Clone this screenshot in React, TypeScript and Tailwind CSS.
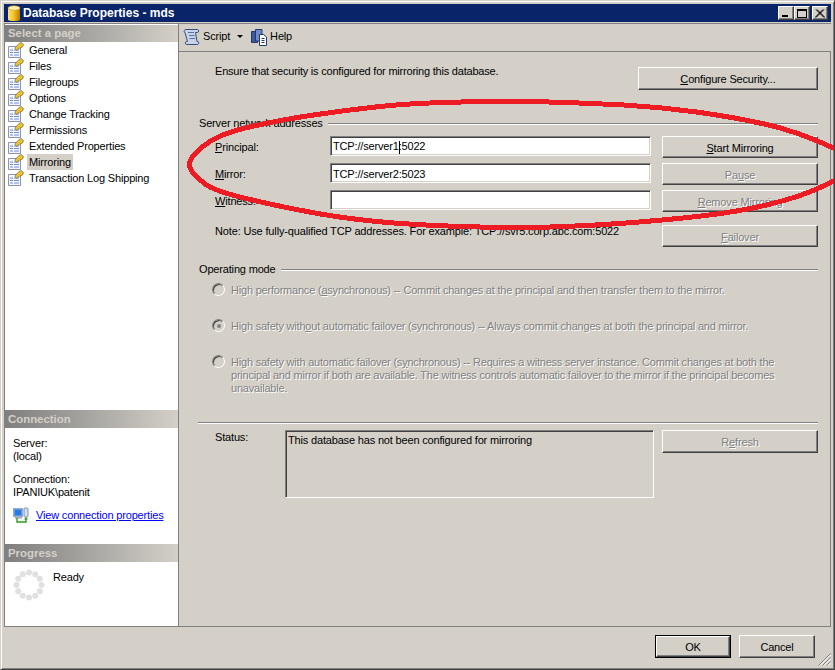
import type { ReactNode } from "react";

const FONT = "font-['Liberation_Sans',Arial,sans-serif]";

// hand-drawn red ring that lies over the form, points read off the screenshot
const RING: [number, number][] = [
  [840, 151], [800, 132], [733, 117], [660, 107], [587, 103], [510, 101], [413, 103], [347, 110],
  [280, 120], [223, 133], [197, 150], [187, 165], [197, 178], [213, 190], [263, 203], [340, 218],
  [413, 225], [510, 228], [557, 227], [633, 223], [733, 213], [800, 197], [840, 178],
];

function ringPath() {
  let d = `M${RING[0][0]} ${RING[0][1]}`;
  for (let i = 1; i < RING.length - 1; i++) {
    const mx = (RING[i][0] + RING[i + 1][0]) / 2;
    const my = (RING[i][1] + RING[i + 1][1]) / 2;
    d += ` Q${RING[i][0]} ${RING[i][1]} ${mx} ${my}`;
  }
  const last = RING[RING.length - 1];
  return d + ` L${last[0]} ${last[1]}`;
}

function PageIcon() {
  return (
    <svg width="16" height="16" viewBox="0 0 16 16" className="shrink-0">
      <path d="M0.5 4.5H12.5V15.5H0.5Z" fill="#f4f6fc" stroke="#8a94b0" />
      <path d="M2 8H5M6 8H11M2 10.5H5M6 10.5H11M2 13H5M6 13H11" stroke="#6f8ad8" />
      <path d="M7 6L11 1.5L13 0.5L15.5 2.5L14.5 5L11 6.5L8.5 8.5Z" fill="#f0c232" stroke="#6e6a3a" strokeWidth="0.7" />
    </svg>
  );
}

function DbIcon() {
  return (
    <svg width="14" height="17" viewBox="0 0 14 17" className="shrink-0">
      <defs>
        <linearGradient id="db" x1="0" x2="1" y1="0" y2="0">
          <stop offset="0" stopColor="#ffe27a" />
          <stop offset="0.45" stopColor="#f8c42a" />
          <stop offset="1" stopColor="#b87a08" />
        </linearGradient>
      </defs>
      <path d="M1 3V14.5C1 16.5 13 16.5 13 14.5V3Z" fill="url(#db)" />
      <ellipse cx="7" cy="3" rx="6" ry="2.2" fill="#fff2b0" stroke="#d09a18" strokeWidth="0.6" />
    </svg>
  );
}

function ScriptIcon() {
  return (
    <svg width="18" height="18" viewBox="0 0 18 18" className="shrink-0">
      <path d="M4 1.5H15.5C17 1.5 17 4.5 15.5 4.5H13.5L15 13.5H16C17 13.5 17 16.5 15.5 16.5H4.5C3 16.5 3 13.5 4.5 13.5H5.5L3 4.5C1.5 4.5 2 1.5 4 1.5Z" fill="#c8d2e8" stroke="#33507f" />
      <path d="M6 4.5H12M7 7.5H12.5M7.5 10.5H13" stroke="#5a72a0" />
    </svg>
  );
}

function HelpIcon() {
  return (
    <svg width="16" height="18" viewBox="0 0 16 18" className="shrink-0">
      <path d="M0.5 3.5H6.5V14.5H0.5Z" fill="#3a5a9c" stroke="#24386c" />
      <path d="M4.5 1.5H11V13H4.5Z" fill="#6e8cc8" stroke="#24386c" />
      <path d="M8.5 6.5H12.5L15.5 9V17.5H8.5Z" fill="#fff" stroke="#24386c" />
      <path d="M10.5 10.5H13.5M10.5 12.5H13.5M10.5 14.5H13.5" stroke="#24386c" />
    </svg>
  );
}

function ConnIcon() {
  return (
    <svg width="16" height="16" viewBox="0 0 16 16" className="shrink-0">
      <rect x="0.5" y="1.5" width="9" height="8" fill="#5a9ae8" stroke="#9aaccc" />
      <rect x="2" y="3" width="6" height="5" fill="#2a78e0" />
      <rect x="2" y="10" width="7" height="1.5" fill="#a0a8b8" />
      <rect x="11" y="1" width="4" height="9" rx="1" fill="#d8dfec" stroke="#8090b0" />
      <path d="M4 11V15H13V11" fill="none" stroke="#2f9a1e" strokeWidth="1.4" />
      <path d="M11 12.5L13 10L15 12.5Z" fill="#2f9a1e" />
    </svg>
  );
}

function Spinner() {
  const dots = Array.from({ length: 12 }, (_, i) => (i * Math.PI) / 6);
  return (
    <svg width="32" height="32" viewBox="0 0 32 32" className="mt-[-2px] shrink-0">
      {dots.map((a) => (
        <circle key={a} cx={16 + 12.5 * Math.cos(a)} cy={16 + 12.5 * Math.sin(a)} r="3" fill="#e0e0e0" />
      ))}
    </svg>
  );
}

function PanelHead({ children, className = "h-[18px]" }: { children: ReactNode; className?: string }) {
  return (
    <div className={`flex shrink-0 items-center bg-gradient-to-r from-[#7f7f7f] to-[#d4d0c8] pl-[3px] text-[11.4px] font-bold tracking-normal text-[#d4d0c8] ${className}`}>
      {children}
    </div>
  );
}

function Btn({ children, off, className = "" }: { children: ReactNode; off?: boolean; className?: string }) {
  return (
    <div
      className={`flex shrink-0 items-center justify-center border border-t-white border-r-[#404040] border-b-[#404040] border-l-white bg-[#d4d0c8] pt-[2px] shadow-[inset_-1px_-1px_0_#808080] ${
        off ? "text-[#808080] [text-shadow:1px_1px_0_#fff]" : "text-black"
      } ${className}`}
    >
      <span>{children}</span>
    </div>
  );
}

function Field({ value }: { value?: ReactNode }) {
  return (
    <div className="flex h-[20px] w-[321px] shrink-0 items-center border border-t-[#808080] border-r-white border-b-white border-l-[#808080] bg-white pl-[2px] pt-[2px] shadow-[inset_1px_1px_0_#404040,inset_-1px_-1px_0_#d4d0c8]">
      <span>{value}</span>
    </div>
  );
}

function FormRow({ label, value, btn, off }: { label: ReactNode; value?: ReactNode; btn: ReactNode; off?: boolean }) {
  return (
    <div className="flex h-[22px] items-start pl-[16px]">
      <div className="w-[115px] shrink-0 pt-[5px]">{label}</div>
      <Field value={value} />
      <Btn off={off} className="ml-[11px] h-[22px] w-[156px]">
        {btn}
      </Btn>
    </div>
  );
}

function GroupHead({ title }: { title: string }) {
  return (
    <div className="flex h-[13px] items-center gap-[5px]">
      <span className="whitespace-nowrap">{title}</span>
      <div className="h-[2px] flex-1 border-t border-t-[#808080] bg-white" />
    </div>
  );
}

function Radio({ on }: { on?: boolean }) {
  return (
    <div className="mt-[-1px] flex h-[13px] w-[13px] shrink-0 items-center justify-center rounded-full border border-t-[#808080] border-r-white border-b-white border-l-[#808080] bg-[#d4d0c8] shadow-[inset_1px_1px_0_#404040]">
      {on && <div className="h-[4px] w-[4px] rounded-full bg-[#808080]" />}
    </div>
  );
}

function Mode({ on, children }: { on?: boolean; children: ReactNode }) {
  return (
    <div className="flex gap-[6px] pl-[13px]">
      <Radio on={on} />
      <div className="whitespace-nowrap tracking-[-0.21px] text-[#808080] [text-shadow:1px_1px_0_#fff]">{children}</div>
    </div>
  );
}

const PAGES = [
  "General",
  "Files",
  "Filegroups",
  "Options",
  "Change Tracking",
  "Permissions",
  "Extended Properties",
  "Mirroring",
  "Transaction Log Shipping",
];

export default function App() {
  return (
    <div
      className={`${FONT} relative flex h-[670px] w-[835px] flex-col overflow-hidden border-t border-r border-b border-l border-t-[#d4d0c8] border-r-[#404040] border-b-[#404040] border-l-[#d4d0c8] bg-[#d4d0c8] p-[3px] text-[11px] leading-[13px] tracking-[-0.17px] text-black shadow-[inset_1px_1px_0_#fff,inset_-1px_-1px_0_#808080]`}
    >
      {/* title bar */}
      <div className="flex h-[18px] shrink-0 items-center bg-[#0a246a] pl-[3px] pr-[3px]">
        <DbIcon />
        <span className="ml-[2px] text-[12px] font-bold tracking-normal text-white">Database Properties - mds</span>
        <div className="ml-auto flex items-center">
          <Btn className="h-[14px] w-[16px]">
            <div className="mt-[4px] mr-[3px] h-[2px] w-[6px] bg-black" />
          </Btn>
          <Btn className="h-[14px] w-[16px]">
            <div className="mt-[-2px] h-[9px] w-[10px] border border-t-2 border-black" />
          </Btn>
          <Btn className="ml-[2px] h-[14px] w-[16px]">
            <svg width="10" height="9" viewBox="0 0 10 9" className="mt-[-2px]">
              <path d="M1 0.5L9 8.5M9 0.5L1 8.5M2 0.5L10 8.5M8 0.5L0 8.5" stroke="#000" />
            </svg>
          </Btn>
        </div>
      </div>

      {/* panels */}
      <div className="mt-[1px] flex min-h-0 flex-1 border-t border-b border-l border-t-[#808080] border-b-[#808080] border-l-[#808080]">
        <div className="flex w-[173px] shrink-0 flex-col bg-white">
          <div className="h-[1px] shrink-0" />
          <PanelHead className="h-[17px]">Select a page</PanelHead>
          <div className="flex h-[368px] shrink-0 flex-col pl-[3px]">
            {PAGES.map((p) => (
              <div key={p} className="flex h-[16px] shrink-0 items-center">
                <PageIcon />
                <span className={`ml-[3px] flex h-[16px] items-center whitespace-nowrap px-[2px] ${p === "Mirroring" ? "bg-[#d4d0c8]" : ""}`}>
                  {p}
                </span>
              </div>
            ))}
          </div>
          <PanelHead>Connection</PanelHead>
          <div className="flex h-[116px] shrink-0 flex-col pl-[8px] pt-[9px]">
            <div>Server:</div>
            <div>(local)</div>
            <div className="mt-[10px]">Connection:</div>
            <div>IPANIUK\patenit</div>
            <div className="mt-[8px] flex items-center">
              <ConnIcon />
              <span className="ml-[7px] whitespace-nowrap text-[#0000ff] underline">View connection properties</span>
            </div>
          </div>
          <PanelHead>Progress</PanelHead>
          <div className="flex flex-1 pl-[8px] pt-[9px]">
            <Spinner />
            <span className="ml-[8px]">Ready</span>
          </div>
        </div>

        <div className="flex min-w-0 flex-1 flex-col border-l border-l-[#808080]">
          {/* toolbar */}
          <div className="flex h-[28px] shrink-0 items-center border-b border-b-[#808080] pb-[2px] pl-[3px]">
            <ScriptIcon />
            <span className="ml-[3px]">Script</span>
            <div className="ml-[7px] h-0 w-0 border-x-[3px] border-t-[3px] border-x-transparent border-t-black" />
            <div className="ml-[8px]"><HelpIcon /></div>
            <span className="ml-[3px]">Help</span>
          </div>

          {/* form */}
          <div className="flex min-h-0 flex-1 flex-col border-r border-r-[#808080] pl-[20px] pr-[12px]">
            <div className="mt-[12px] flex items-start justify-between">
              <span className="pl-[16px] pt-[1px] tracking-[-0.21px]">Ensure that security is configured for mirroring this database.</span>
              <Btn className="mt-[3px] h-[23px] w-[180px]"><u>C</u>onfigure Security...</Btn>
            </div>

            <div className="mt-[27px]"><GroupHead title="Server network addresses" /></div>

            <div className="mt-[6px] flex flex-col gap-[5px]">
              <FormRow
                label={<><u>P</u>rincipal:</>}
                value={<>TCP://server1<span className="mr-[-1px] inline-block h-[13px] w-px bg-black align-middle" />:5022</>}
                btn={<><u>S</u>tart Mirroring</>}
              />
              <FormRow label={<><u>M</u>irror:</>} value="TCP://server2:5023" off btn={<>Pa<u>u</u>se</>} />
              <FormRow label={<><u>W</u>itness:</>} off btn={<><u>R</u>emove Mirroring</>} />
            </div>

            <div className="mt-[13px] flex h-[22px] items-start justify-between pl-[16px]">
              <span className="whitespace-nowrap tracking-[-0.15px]">Note: Use fully-qualified TCP addresses. For example: TCP://svr5.corp.abc.com:5022</span>
              <Btn off className="h-[22px] w-[156px]"><u>F</u>ailover</Btn>
            </div>

            <div className="mt-[16px]"><GroupHead title="Operating mode" /></div>

            <div className="mt-[8px] flex flex-col gap-[23px]">
              <Mode>High performance (<u>a</u>synchronous) -- Commit changes at the principal and then transfer them to the mirror.</Mode>
              <Mode on>High safety with<u>o</u>ut automatic failover (synchronous) -- Always commit changes at both the principal and mirror.</Mode>
              <Mode>
                High safety with automatic failover (s<u>y</u>nchronous) -- Requires a witness server instance. Commit changes at both the
                <br />
                principal and mirror if both are available. The witness controls automatic failover to the mirror if the principal becomes
                <br />
                unavailable.
              </Mode>
            </div>

            <div className="mt-[27px] ml-[-1px] h-[2px] shrink-0 border-t border-t-[#808080] bg-white" />

            <div className="mt-[6px] flex items-start">
              <span className="w-[86px] shrink-0 pl-[16px] pt-[1px]">Status:</span>
              <div className="h-[68px] w-[369px] shrink-0 border border-t-[#808080] border-r-white border-b-white border-l-[#808080] pl-[2px] pt-[3px] shadow-[inset_1px_1px_0_#404040]">
                This database has not been configured for mirroring
              </div>
              <Btn off className="ml-[8px] h-[23px] w-[156px]">R<u>e</u>fresh</Btn>
            </div>
          </div>
        </div>
      </div>

      {/* dialog buttons */}
      <div className="relative flex h-[39px] shrink-0 items-start justify-end gap-[8px] pr-[16px] pt-[8px]">
        <div className="flex h-[23px] w-[76px] border border-black">
          <Btn className="h-full w-full">OK</Btn>
        </div>
        <Btn className="h-[23px] w-[76px]">Cancel</Btn>
        <svg width="14" height="14" viewBox="0 0 14 14" className="absolute right-0 bottom-0">
          <path d="M13.5 1.5L1.5 13.5M13.5 5.5L5.5 13.5M13.5 9.5L9.5 13.5" stroke="#808080" />
          <path d="M13.5 3L3 13.5M13.5 7L7 13.5M13.5 11L11 13.5" stroke="#fff" />
        </svg>
      </div>

      <svg width="835" height="670" viewBox="0 0 835 670" className="pointer-events-none absolute top-[-1px] left-[-1px]">
        <path d={ringPath()} fill="none" stroke="#ed1c24" strokeWidth="5" strokeLinejoin="round" shapeRendering="crispEdges" />
      </svg>
    </div>
  );
}
